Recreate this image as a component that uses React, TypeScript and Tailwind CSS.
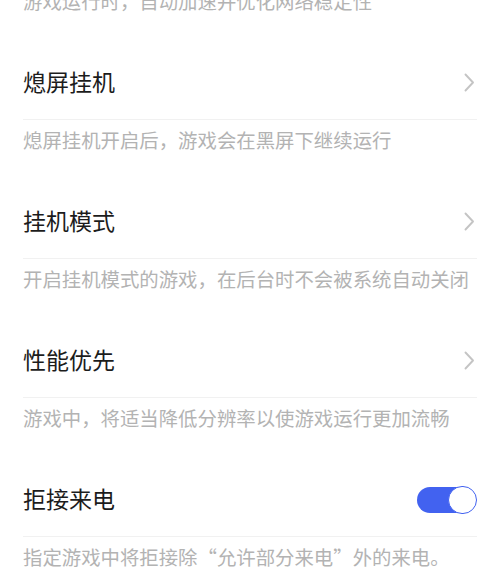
import React from "react";

const Chevron = () => (
  <svg width="11" height="19" viewBox="0 0 11 19" fill="none">
    <path d="M1.5 1.5 L9 9.5 L1.5 17.5" stroke="#c4c4c4" strokeWidth="1.9" strokeLinecap="round" strokeLinejoin="round" />
  </svg>
);

const Toggle = () => (
  <div className="relative w-[60px] h-[28px] flex items-center">
    <div className="absolute left-0 right-[2px] top-[1px] h-[26px] rounded-full bg-[#4262f0]" />
    <div className="absolute right-0 top-0 w-[29px] h-[28px] rounded-full bg-white border-[1.5px] border-[#4262f0]" />
  </div>
);

const Desc = ({ text }: { text: string }) => (
  <div className="px-[23px] pt-[9px] pb-[34px]">
    <p className="text-[19.4px] leading-[22px] text-[#b3b3b3] whitespace-nowrap">{text}</p>
  </div>
);

const Title = ({ text, right }: { text: string; right: React.ReactNode }) => (
  <div className="mx-[23px] h-[74px] flex items-center justify-between border-b border-[#f1f1f1]">
    <span className="text-[23px] leading-[28px] text-[#1c1c1c] mb-[4px]">{text}</span>
    <div className="flex items-center">{right}</div>
  </div>
);

export default function App() {
  const items = [
    { title: "熄屏挂机", desc: "熄屏挂机开启后，游戏会在黑屏下继续运行", toggle: false },
    { title: "挂机模式", desc: "开启挂机模式的游戏，在后台时不会被系统自动关闭", toggle: false },
    { title: "性能优先", desc: "游戏中，将适当降低分辨率以使游戏运行更加流畅", toggle: false },
    { title: "拒接来电", desc: "指定游戏中将拒接除“允许部分来电”外的来电。", toggle: true },
  ];
  return (
    <div
      className="w-[500px] h-[569px] overflow-hidden bg-white"
      style={{ fontFamily: '"Noto Sans CJK SC", "Noto Sans", sans-serif' }}
    >
      <div className="-mt-[19px]">
        <Desc text="游戏运行时，自动加速并优化网络稳定性" />
        {items.map((it) => (
          <div key={it.title}>
            <Title
              text={it.title}
              right={it.toggle ? <Toggle /> : <div className="pr-[2px]"><Chevron /></div>}
            />
            <Desc text={it.desc} />
          </div>
        ))}
      </div>
    </div>
  );
}
